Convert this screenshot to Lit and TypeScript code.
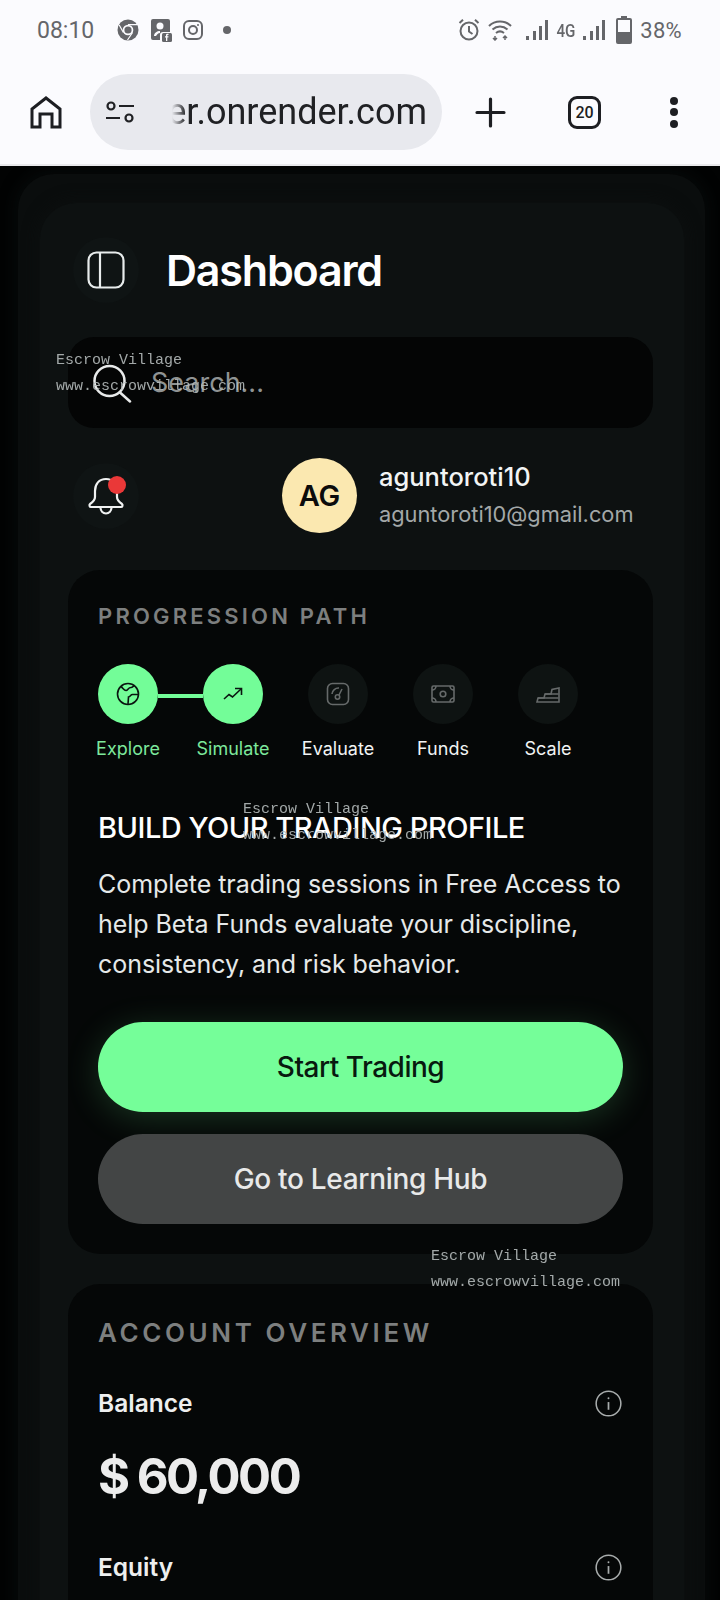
import { LitElement, html, css, svg } from "lit";
import { customElement } from "lit/decorators.js";

const steps = [
  {
    label: "Explore",
    done: true,
    icon: svg`<circle cx="12" cy="12" r="10.500"/><path d="M5 4.500c2 1.500 3 4 5 4 2 0 2-3 5-3 1.500 0 2.500-1.500 3-1.500"/><path d="M22 12.500h-5.500c-2 0-2 2-4 2.500l-.5 7"/>`,
  },
  {
    label: "Simulate",
    done: true,
    icon: svg`<path d="M3 17l5-4.500 3.500 2.500L20 7"/><path d="M14 6.500h6.500V13"/>`,
  },
  {
    label: "Evaluate",
    done: false,
    icon: svg`<rect x="1.500" y="1.500" width="21" height="21" rx="5"/><path d="M6 12a6.500 6.500 0 0 1 7-6"/><circle cx="11.500" cy="15" r="2.200"/><path d="M13 13l3-6"/>`,
  },
  {
    label: "Funds",
    done: false,
    icon: svg`<rect x="1" y="4" width="22" height="16" rx="1.500"/><circle cx="12" cy="12" r="2.800"/><path d="M1 8a4 4 0 0 0 4-4M19 4a4 4 0 0 0 4 4M1 16a4 4 0 0 1 4 4M19 20a4 4 0 0 1 4-4"/>`,
  },
  {
    label: "Scale",
    done: false,
    icon: svg`<path d="M1 20l1-4h6l1-4h6l1-4.500 7-1.500v14z"/><path d="M2 16h20.500M9 12h13.500"/>`,
  },
];

const info = html`<svg class="info" viewBox="0 0 28 28" fill="none" stroke="currentColor">
  <circle cx="14" cy="14" r="12.800" stroke-width="1.600"/>
  <path d="M14 12.500v8" stroke-width="1.800"/>
  <circle cx="14" cy="8.500" r="1" fill="currentColor" stroke="none"/>
</svg>`;

@customElement("app-root")
export class AppRoot extends LitElement {
  static styles = css`
    :host {
      display: block;
      box-sizing: border-box;
      position: relative;
      height: 1600px;
      overflow: hidden;
      background: #020303;
      font-family: "Inter", "Noto Sans", sans-serif;
      color: #f2f4f4;
    }

    *, *:before, *:after {
      box-sizing: inherit;
    }

    .chrome {
      position: relative;
      z-index: 1;
      height: 166px;
      background: #fbfbfe;
      border-bottom: 2px solid #e9e9ec;
      font-family: "Roboto", sans-serif;
    }

    .status {
      height: 60px;
      display: flex;
      align-items: center;
      justify-content: space-between;
      padding: 0 38px 0 37px;
      color: #65666a;
      font-size: 23px;
    }

    .status-group {
      display: flex;
      align-items: center;
    }

    .status-group svg {
      display: block;
      fill: #65666a;
    }

    .time {
      margin-right: 13px;
    }

    .left-icons {
      gap: 10px;
    }

    .right-icons {
      gap: 8px;
    }

    .net {
      font-size: 19px;
      font-weight: 500;
      margin: 0 -3px;
      transform: scaleX(0.8);
    }

    .battery-text {
      font-size: 22px;
      letter-spacing: 0.3px;
    }

    .toolbar {
      height: 104px;
      display: flex;
      align-items: center;
      padding-left: 30px;
      color: #1d1e22;
    }

    .home {
      width: 32px;
      height: 33px;
      flex: none;
    }

    .url {
      width: 352px;
      height: 76px;
      margin-left: 28px;
      border-radius: 38px;
      background: #e8e9ee;
      display: flex;
      align-items: center;
      justify-content: space-between;
      padding: 0 15px 0 16px;
      flex: none;
      font-size: 36px;
      color: #202124;
    }

    .url svg {
      width: 28px;
      height: 22px;
      flex: none;
    }

    .url-text {
      white-space: nowrap;
      -webkit-mask-image: linear-gradient(to right, transparent 5px, #000 19px);
      mask-image: linear-gradient(to right, transparent 5px, #000 19px);
    }

    .plus {
      width: 31px;
      height: 31px;
      margin-left: 33px;
      flex: none;
    }

    .tabs {
      width: 33px;
      height: 33px;
      margin-left: 62px;
      border: 3.500px solid #1d1e22;
      border-radius: 9px;
      font-size: 16px;
      font-weight: 500;
      display: flex;
      align-items: center;
      justify-content: center;
      flex: none;
    }

    .more {
      display: flex;
      flex-direction: column;
      gap: 3.500px;
      margin-left: 69px;
      flex: none;
    }

    .more i {
      width: 8px;
      height: 8px;
      border-radius: 50%;
      background: #1d1e22;
    }

    .frame {
      margin: 8px 15px 0 18px;
      padding: 29px 21px 0 22px;
      border-radius: 36px 36px 0 0;
      background: #0a0d0d;
      box-shadow: 0 0 14px 5px #060909;
    }

    .panel {
      padding: 30px 31px 0 28px;
      border-radius: 36px 36px 0 0;
      background: #0d1111;
      box-shadow: 0 0 14px 4px #0c0f0f;
    }

    .title-row {
      display: flex;
      align-items: center;
      height: 74px;
      gap: 27px;
      padding-left: 5px;
      margin-bottom: 30px;
    }

    .round {
      width: 66px;
      height: 66px;
      border-radius: 50%;
      background: #0f1414;
      display: flex;
      align-items: center;
      justify-content: center;
      flex: none;
      position: relative;
    }

    .round svg {
      width: 38px;
      height: 38px;
    }

    h1 {
      margin: 0;
      font-size: 43px;
      font-weight: 600;
      letter-spacing: -1.200px;
      color: #fff;
    }

    .search {
      height: 91px;
      border-radius: 26px;
      background: #040505;
      display: flex;
      align-items: center;
      gap: 19px;
      padding-left: 24px;
      color: #8f9393;
      font-size: 27px;
    }

    .search svg {
      width: 40px;
      height: 40px;
      color: #e8eaea;
    }

    .user-row {
      display: flex;
      align-items: center;
      height: 75px;
      margin-top: 30px;
      padding-left: 5px;
    }

    .dot {
      position: absolute;
      top: 13px;
      right: 13px;
      width: 18px;
      height: 18px;
      border-radius: 50%;
      background: #ea3838;
    }

    .avatar {
      width: 75px;
      height: 75px;
      margin-left: 143px;
      border-radius: 50%;
      background: #fbe8b0;
      color: #0b0b0b;
      font-size: 29px;
      font-weight: 600;
      display: flex;
      align-items: center;
      justify-content: center;
      flex: none;
    }

    .user-text {
      margin-left: 22px;
    }

    .user-name {
      font-size: 25.500px;
      line-height: 36px;
      font-weight: 500;
    }

    .user-mail {
      font-size: 21.800px;
      line-height: 38px;
      color: #a3a8a8;
    }

    .card {
      border-radius: 32px;
      background: #050707;
      padding: 30px;
    }

    .first {
      margin-top: 37px;
    }

    .second {
      margin-top: 30px;
      padding-bottom: 80px;
    }

    h2 {
      margin: 0;
      color: #7d7f7f;
      font-weight: 600;
      line-height: 32px;
    }

    .first h2 {
      font-size: 22px;
      letter-spacing: 3.200px;
    }

    .second h2 {
      margin-top: 3px;
      font-size: 26px;
      letter-spacing: 3.600px;
    }

    .steps {
      display: flex;
      gap: 45px;
      margin-top: 32px;
    }

    .step {
      width: 60px;
      display: flex;
      flex-direction: column;
      align-items: center;
      gap: 12px;
      position: relative;
      font-size: 18px;
      line-height: 26px;
      white-space: nowrap;
    }

    .step.done {
      color: #7de89c;
    }

    .circle {
      width: 60px;
      height: 60px;
      border-radius: 50%;
      background: #0e1312;
      color: #666a6a;
      display: flex;
      align-items: center;
      justify-content: center;
    }

    .done .circle {
      background: #73fd98;
      color: #0a1510;
    }

    .circle svg {
      width: 24px;
      height: 24px;
    }

    .link:after {
      content: "";
      position: absolute;
      left: 60px;
      top: 30px;
      width: 45px;
      height: 4px;
      background: #73fd98;
    }

    h3 {
      margin: 46px 0 0;
      font-size: 29px;
      line-height: 40px;
      font-weight: 500;
      letter-spacing: -0.500px;
      color: #fff;
    }

    .copy {
      margin: 16px 0 0;
      font-size: 25px;
      line-height: 40px;
      color: #e6e9e9;
      letter-spacing: -0.050px;
    }

    .btn {
      height: 90px;
      border-radius: 45px;
      display: flex;
      align-items: center;
      justify-content: center;
      font-size: 28px;
      font-weight: 500;
      letter-spacing: -0.300px;
    }

    .primary {
      margin-top: 38px;
      background: #75fe99;
      color: #08190f;
      letter-spacing: -0.500px;
      box-shadow: 0 6px 34px rgba(115, 253, 152, 0.18);
    }

    .secondary {
      margin-top: 22px;
      background: #434545;
      color: #e8e9e9;
    }

    .metric {
      display: flex;
      align-items: center;
      justify-content: space-between;
      height: 40px;
      font-size: 24.500px;
      font-weight: 600;
      color: #eeefef;
    }

    .balance-label {
      margin-top: 34px;
    }

    .equity-label {
      margin-top: 31px;
    }

    .info {
      width: 27px;
      height: 27px;
      color: #a8acac;
      margin-right: 1px;
    }

    .amount {
      height: 80px;
      margin-top: 13px;
      display: flex;
      align-items: center;
      font-size: 49px;
      font-weight: 700;
      letter-spacing: -2.500px;
      color: #ececec;
    }

    .mark {
      position: absolute;
      font-family: "Liberation Mono", monospace;
      font-size: 15px;
      line-height: 26px;
      color: #b4baba;
      opacity: 0.9;
      white-space: nowrap;
    }

    .m1 {
      left: 56px;
      top: 348px;
    }

    .m2 {
      left: 243px;
      top: 797px;
    }

    .m3 {
      left: 431px;
      top: 1244px;
    }
  `;

  renderStatus() {
    return html`<div class="status">
      <div class="status-group left-icons">
        <span class="time">08:10</span>
        <svg width="22" height="22" viewBox="0 0 22 22">
          <circle cx="11" cy="11" r="10.500"/>
          <circle cx="11" cy="11" r="5.300" fill="#fbfbfe"/>
          <circle cx="11" cy="11" r="3.600"/>
          <path d="M11 5.700h9M6.400 13.500L2.200 6M15.600 13.500L10.500 21" stroke="#fbfbfe" stroke-width="1.200"/>
        </svg>
        <svg width="24" height="24" viewBox="0 0 24 24">
          <path d="M2 3a2 2 0 0 1 2-2h15a2 2 0 0 1 2 2v11h-7a3 3 0 0 0-3 3v5H4a2 2 0 0 1-2-2z"/>
          <circle cx="11" cy="8" r="3.500" fill="#fbfbfe"/>
          <path d="M5 18c0-3 3-5 6-5v2c-2 0-3 1.500-4 3z" fill="#fbfbfe"/>
          <rect x="13" y="15" width="10" height="9" rx="1.500"/>
          <path d="M17 23v-3.500h-1v-1.200h1V17c0-.8.600-1.200 1.500-1.200h1v1.200h-.7c-.4 0-.5.200-.5.500v.8h1.200l-.2 1.200h-1V23z" fill="#fbfbfe"/>
        </svg>
        <svg width="20" height="20" viewBox="0 0 20 20" style="fill:none;stroke:#65666a" stroke-width="2">
          <rect x="1" y="1" width="18" height="18" rx="5"/>
          <circle cx="10" cy="10" r="4"/>
          <circle cx="15" cy="5" r="1" style="fill:#65666a;stroke:none"/>
        </svg>
        <svg width="10" height="10" viewBox="0 0 10 10" style="margin-left:9px"><circle cx="5" cy="5" r="4"/></svg>
      </div>
      <div class="status-group right-icons">
        <svg width="22" height="24" viewBox="0 0 22 24" style="fill:none;stroke:#65666a" stroke-width="2">
          <circle cx="11" cy="13" r="8.500"/>
          <path d="M11 8v5.500l3.500 2.500M1.500 5L5 1.800M20.500 5L17 1.800"/>
        </svg>
        <svg width="24" height="22" viewBox="0 0 24 22" style="fill:none;stroke:#65666a" stroke-width="2">
          <path d="M1 7c6-6 16-6 22 0M4.500 10.500c4.500-4 10.500-4 15 0M8 14c2.500-2 5.500-2 8 0"/>
          <path d="M7 17v4M5 19l2 2 2-2M17 21v-4M15 19l2-2 2 2" stroke-width="1.500"/>
        </svg>
        <svg width="24" height="22" viewBox="0 0 24 22" style="margin-left:5px">
          <rect x="1" y="17" width="3" height="4"/><rect x="8" y="12" width="3" height="9"/><rect x="14" y="7" width="3" height="14"/><rect x="20" y="1" width="3" height="20"/>
        </svg>
        <span class="net">4G</span>
        <svg width="24" height="22" viewBox="0 0 24 22">
          <rect x="1" y="17" width="3" height="4"/><rect x="8" y="12" width="3" height="9"/><rect x="14" y="7" width="3" height="14"/><rect x="20" y="1" width="3" height="20"/>
        </svg>
        <svg width="16" height="28" viewBox="0 0 16 28" style="margin-left:2px">
          <path fill-rule="evenodd" d="M5 0h6v2h3a2 2 0 0 1 2 2v22a2 2 0 0 1-2 2H2a2 2 0 0 1-2-2V4a2 2 0 0 1 2-2h3zM2 4v12h12V4z"/>
        </svg>
        <span class="battery-text">38%</span>
      </div>
    </div>`;
  }

  renderToolbar() {
    return html`<div class="toolbar">
      <svg class="home" viewBox="0 0 32 33" fill="none" stroke="currentColor" stroke-width="3">
        <path d="M2 31V13L16 2l14 11v18h-8V18H10v13z"/>
      </svg>
      <div class="url">
        <svg viewBox="0 0 28 22" fill="none" stroke="currentColor" stroke-width="2.200">
          <circle cx="5" cy="5" r="3.500"/><path d="M13 5h15M0 17h14"/><circle cx="23" cy="17" r="3.500"/>
        </svg>
        <span class="url-text">er.onrender.com</span>
      </div>
      <svg class="plus" viewBox="0 0 31 31" stroke="currentColor" stroke-width="3.200" stroke-linecap="round">
        <path d="M15.500 2v27M2 15.500h27"/>
      </svg>
      <div class="tabs">20</div>
      <div class="more"><i></i><i></i><i></i></div>
    </div>`;
  }

  render() {
    return html`
      <div class="chrome">${this.renderStatus()}${this.renderToolbar()}</div>
      <div class="frame">
        <div class="panel">
          <div class="title-row">
            <div class="round">
              <svg viewBox="0 0 38 38" fill="none" stroke="#e8ecec" stroke-width="2.200">
                <rect x="1.500" y="1.500" width="35" height="35" rx="8"/><path d="M13 1.500v35"/>
              </svg>
            </div>
            <h1>Dashboard</h1>
          </div>
          <div class="search">
            <svg viewBox="0 0 40 40" fill="none" stroke="currentColor" stroke-width="2.500">
              <circle cx="17.500" cy="18" r="15"/><path d="M28 29.500l10 9" stroke-linecap="round"/>
            </svg>
            <span>Search...</span>
          </div>
          <div class="user-row">
            <div class="round">
              <svg viewBox="0 0 38 38" fill="none" stroke="#f0f2f2" stroke-width="2.200">
                <path d="M19 2c-7 0-11 5-11 12v6c0 3-2 5-5 7-1 1-.5 3 1 3h30c1.500 0 2-2 1-3-3-2-5-4-5-7v-6c0-7-4-12-11-12z"/>
                <path d="M13.500 30c0 4 2.500 6.500 5.500 6.500s5.500-2.500 5.500-6.500"/>
              </svg>
              <span class="dot"></span>
            </div>
            <div class="avatar">AG</div>
            <div class="user-text">
              <div class="user-name">aguntoroti10</div>
              <div class="user-mail">aguntoroti10@gmail.com</div>
            </div>
          </div>

          <section class="card first">
            <h2>PROGRESSION PATH</h2>
            <div class="steps">
              ${steps.map(
                (s, i) => html`<div class="step ${s.done ? "done" : ""} ${i === 0 ? "link" : ""}">
                  <div class="circle">
                    <svg viewBox="0 0 24 24" fill="none" stroke="currentColor" stroke-width="1.600">${s.icon}</svg>
                  </div>
                  <span>${s.label}</span>
                </div>`
              )}
            </div>
            <h3>BUILD YOUR TRADING PROFILE</h3>
            <p class="copy">
              Complete trading sessions in Free Access to<br />
              help Beta Funds evaluate your discipline,<br />
              consistency, and risk behavior.
            </p>
            <div class="btn primary">Start Trading</div>
            <div class="btn secondary">Go to Learning Hub</div>
          </section>

          <section class="card second">
            <h2>ACCOUNT OVERVIEW</h2>
            <div class="metric balance-label"><span>Balance</span>${info}</div>
            <div class="amount">$ 60,000</div>
            <div class="metric equity-label"><span>Equity</span>${info}</div>
          </section>
        </div>
      </div>
      <div class="mark m1">Escrow Village<br />www.escrowvillage.com</div>
      <div class="mark m2">Escrow Village<br />www.escrowvillage.com</div>
      <div class="mark m3">Escrow Village<br />www.escrowvillage.com</div>
    `;
  }
}
